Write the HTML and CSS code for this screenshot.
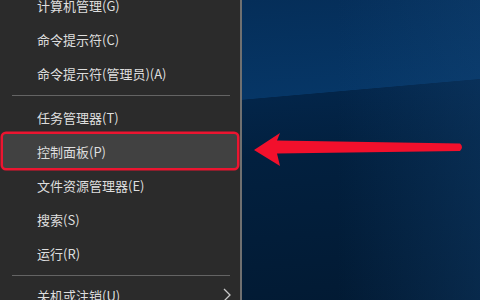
FILE: index.html
```html
<!DOCTYPE html>
<html lang="zh-CN">
<head>
  <meta charset="UTF-8" />
  <title>Win+X 菜单</title>
  <link rel="stylesheet" href="styles.css">
</head>
<body>
  <div class="screen">
    <ul class="menu">
      <li class="item">计算机管理(G)</li>
      <li class="item">命令提示符(C)</li>
      <li class="item">命令提示符(管理员)(A)</li>
      <li class="sep"></li>
      <li class="item">任务管理器(T)</li>
      <li class="item active">控制面板(P)</li>
      <li class="item">文件资源管理器(E)</li>
      <li class="item">搜索(S)</li>
      <li class="item">运行(R)</li>
      <li class="sep"></li>
      <li class="item sub">
        <span>关机或注销(U)</span>
        <svg class="chev" width="8" height="14" viewBox="0 0 8 14">
          <path d="M1 1 L7 7 L1 13" fill="none" stroke="#c8c8c8" stroke-width="1.3"/>
        </svg>
      </li>
    </ul>
    <div class="desktop">
      <!-- annotation arrow pointing at 控制面板 -->
      <svg class="arrow" width="226" height="40" viewBox="250 130 226 40">
        <path d="M254 150 L280 133 L277 140.5 L460 143.5 Q464 147 460 151 L277 153.5 L280 166 Z" fill="#f2102c"/>
      </svg>
    </div>
  </div>
</body>
</html>
```

FILE: styles.css
```css
html, body {
  margin: 0;
  height: 100%;
  overflow: hidden;
}
body {
  font-family: "Noto Sans CJK SC", "Microsoft YaHei", sans-serif;
  background: #2b2b2b;
}
.screen {
  display: flex;
  height: 300px;
}
.menu {
  list-style: none;
  margin: 0;
  padding: 0;
  width: 240px;
  background: #2b2b2b;
  border-right: 2px solid #707070;
  flex-shrink: 0;
}
.menu .item {
  height: 34px;
  display: flex;
  align-items: center;
  padding-left: 37px;
  padding-right: 12px;
  font-size: 13px;
  color: #dedede;
}
.menu .item:first-child {
  margin-top: -12px;
}
.menu .sep {
  height: 10px;
  display: flex;
  align-items: center;
}
.menu .sep::before {
  content: "";
  flex: 1;
  margin: 0 10px 0 12px;
  border-top: 1px solid #646464;
}
.menu .item.active {
  margin: 0 3px;
  padding-left: 34px;
  background: #414141;
  border-radius: 3px;
  box-shadow: 0 0 0 2.5px #ec1530;
}
.menu .item.sub {
  justify-content: space-between;
  margin-top: -2px;
}
.chev {
  margin-right: -3px;
}
.desktop {
  flex: 1;
  position: relative;
  background:
    linear-gradient(90deg, rgba(10, 40, 80, 0) 40%, rgba(20, 70, 120, 0.35) 100%),
    linear-gradient(175deg, #052e59 0%, #063666 31%, #032549 31.2%, #02203f 50%, #021a33 100%);
}
.arrow {
  position: absolute;
  left: 8px;
  top: 130px;
}
```
